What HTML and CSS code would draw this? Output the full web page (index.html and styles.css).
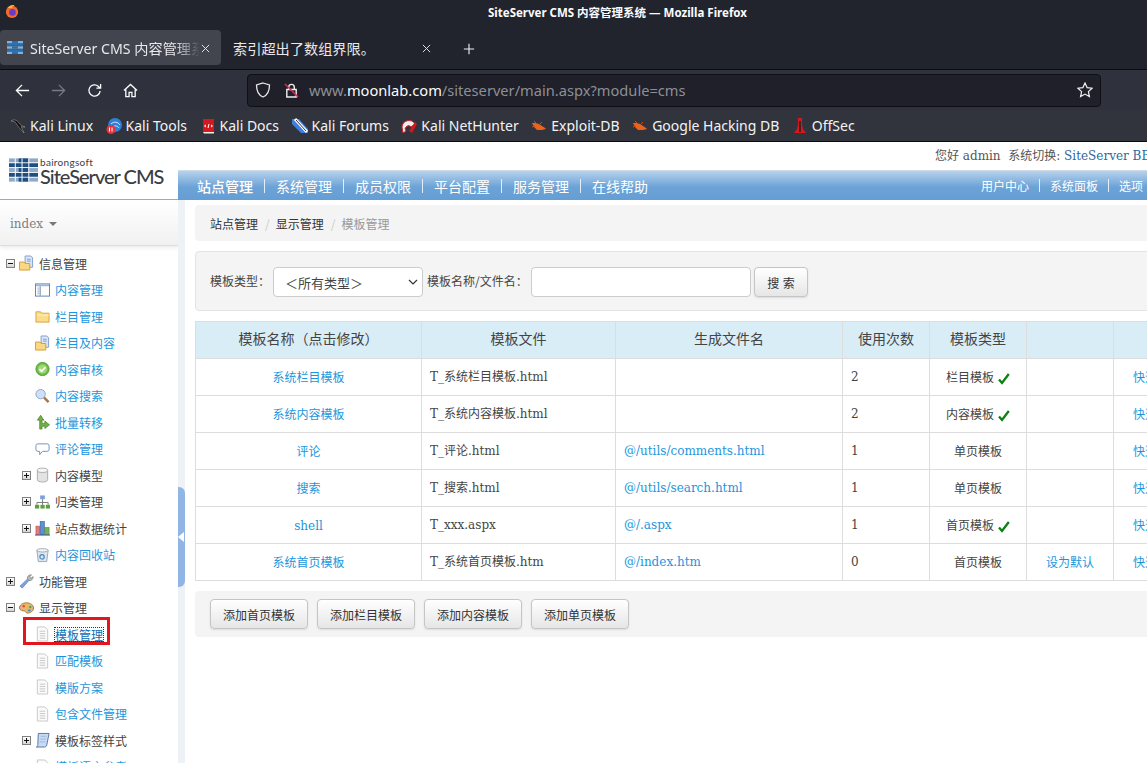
FILE: index.html
```html
<!DOCTYPE html>
<html lang="zh">
<head>
<meta charset="utf-8">
<title>SiteServer CMS 内容管理系统</title>
<link rel="stylesheet" href="styles.css">
</head>
<body>
<svg class="defs" aria-hidden="true">
  <symbol id="grid" viewBox="0 0 30 24">
    <g fill="#8fa9c6"><rect y="0" width="30" height="4"/><rect y="10" width="30" height="4"/><rect y="20" width="30" height="4"/></g>
    <g fill="#1f4f82"><rect y="5" width="30" height="4"/><rect y="15" width="30" height="4"/><rect x="10" width="10" height="4"/><rect x="10" y="10" width="10" height="4"/><rect x="10" y="20" width="10" height="4"/></g>
    <g fill="#fff"><rect x="6" width="1" height="24"/><rect x="13" width="1" height="24"/><rect x="20" width="1" height="24"/></g>
  </symbol>
  <symbol id="fav" viewBox="0 0 16 13">
    <g fill="#7fb2e0"><rect width="16" height="2.400"/><rect y="5.300" width="16" height="2.400"/><rect y="10.600" width="16" height="2.400"/></g>
    <g fill="#2f6ea8"><rect x="5" width="6" height="2.400"/><rect x="5" y="5.300" width="6" height="2.400"/><rect x="5" y="10.600" width="6" height="2.400"/><rect y="2.900" width="16" height="1.900"/><rect y="8.200" width="16" height="1.900"/></g>
  </symbol>
  <symbol id="page" viewBox="0 0 16 16"><path d="M2.500.5h8l3 3v12h-11z" fill="#fbfbfb" stroke="#c6c6c6"/><path d="M5 5h6M5 7.500h6M5 10h6M5 12.500h6" stroke="#c4c4c4"/></symbol>
  <symbol id="folder" viewBox="0 0 16 16"><path d="M1 3.500h5l1 1.500h8v9.500H1z" fill="#f8dd8b" stroke="#d9a23f"/><path d="M2 7h13" stroke="#fff3c4"/></symbol>
  <symbol id="folderdoc" viewBox="0 0 16 16"><path d="M6.500.5h6l2 2v10h-8z" fill="#dbe6f7" stroke="#7d9ccb"/><path d="M8.500 4h4M8.500 6h4" stroke="#7d9ccb"/><path d="M.5 7h5l1 1.500h5v7H.5z" fill="#f8d982" stroke="#d59a35"/></symbol>
  <symbol id="win" viewBox="0 0 16 16"><rect x=".5" y="1.500" width="15" height="13" fill="#fff" stroke="#5a7fb8"/><rect x="1" y="2" width="14" height="2" fill="#9db7de"/><path d="M5.500 4v10" stroke="#5a7fb8"/><path d="M2.500 6h2M2.500 8h2M2.500 10h2M2.500 12h2" stroke="#aab"/></symbol>
  <symbol id="check" viewBox="0 0 16 16"><circle cx="8" cy="8" r="7" fill="#6fbe44" stroke="#4d9a2b"/><circle cx="8" cy="8" r="4.800" fill="#9fd87a"/><path d="M4.800 8.200l2.300 2.300 4-4.500" fill="none" stroke="#fff" stroke-width="1.800"/></symbol>
  <symbol id="search" viewBox="0 0 16 16"><path d="M9.500 9.500l5 5" stroke="#b0743a" stroke-width="2.600"/><circle cx="6" cy="6" r="5" fill="#cfe0f6" stroke="#8aa6ce"/></symbol>
  <symbol id="move" viewBox="0 0 16 16"><path d="M5 15.500V6H2.500L6 .8 9.500 6H7.500v3.500h3V7l5 4-5 4v-2.500h-3v3z" fill="#72b043" stroke="#3f7d22" stroke-width=".7"/></symbol>
  <symbol id="bubble" viewBox="0 0 16 16"><path d="M3 2.500h10a2 2 0 0 1 2 2v4a2 2 0 0 1-2 2H8l-3 3.500v-3.500H3a2 2 0 0 1-2-2v-4a2 2 0 0 1 2-2z" fill="#fff" stroke="#6e8fb8"/></symbol>
  <symbol id="db" viewBox="0 0 16 16"><path d="M2.500 3v10c0 3.300 11 3.300 11 0V3z" fill="#e3e3e3" stroke="#a9a9a9"/><ellipse cx="8" cy="3" rx="5.500" ry="2.300" fill="#f6f6f6" stroke="#a9a9a9"/></symbol>
  <symbol id="tree" viewBox="0 0 16 16"><rect x="5.500" y="1" width="5" height="4" fill="#7ba2d8"/><path d="M8 5v4M2 11V8.500h12V11M8 9v2" fill="none" stroke="#777"/><g fill="#5ba23c"><rect y="11" width="4.500" height="4"/><rect x="5.800" y="11" width="4.500" height="4"/><rect x="11.500" y="11" width="4.500" height="4"/></g></symbol>
  <symbol id="bars" viewBox="0 0 16 16"><rect x="1" y="6" width="4" height="9" fill="#e77b7b" stroke="#b94a4a" stroke-width=".6"/><rect x="5.500" y="1" width="4.500" height="14" fill="#5e8fd0" stroke="#2c5b9c" stroke-width=".6"/><rect x="10.500" y="7.500" width="4.500" height="7.500" fill="#77b257" stroke="#4c8533" stroke-width=".6"/><path d="M0 15.500h16" stroke="#264a86"/></symbol>
  <symbol id="trash" viewBox="0 0 16 16"><path d="M2 3h12l-1.500 12h-9z" fill="#dfe5ec" stroke="#9aa6b4"/><ellipse cx="8" cy="3" rx="6" ry="1.800" fill="#f2f5f8" stroke="#9aa6b4"/><circle cx="7.500" cy="10" r="2.300" fill="none" stroke="#4a86c8" stroke-width="1.300"/></symbol>
  <symbol id="wrench" viewBox="0 0 16 16"><path d="M1 13.500L9.500 5.500 11 7 3.500 15.500z" fill="#7ea3dc" stroke="#4f76b4" stroke-width=".7"/><path d="M9 6c-.6-2.800 1.500-5 4.300-4.600L11.500 3.500l1.300 1.500 2.300-1.700C15.400 6 13 8.200 10.500 7.500z" fill="#b8b8b8" stroke="#777" stroke-width=".7"/></symbol>
  <symbol id="palette" viewBox="0 0 16 16"><path d="M8 2.500c4.500 0 7.500 2.500 7.500 5.500s-3 5.500-6.500 5.500c-2 0-1.500-2-3-2.200C4 11 .5 10.500.5 8c0-3 3-5.500 7.500-5.500z" fill="#e3b676" stroke="#a97a3c"/><circle cx="5" cy="6" r="1.300" fill="#d94b3d"/><circle cx="8.500" cy="5" r="1.300" fill="#f0c132"/><circle cx="12" cy="7" r="1.300" fill="#5aa845"/><circle cx="11" cy="10.500" r="1.300" fill="#4a86c8"/></symbol>
  <symbol id="scroll" viewBox="0 0 16 16"><path d="M3.500 1h11.500l-2.500 12.500c-.3 1.500-1.500 2-2.500 2H1.500C3 15 3 14 3 13z" fill="#c8dbf4" stroke="#54719f"/><path d="M6 4h6M5.500 7h6M5 10h6" stroke="#9db8dc"/></symbol>
  <symbol id="tick" viewBox="0 0 12 12"><path d="M1 6.500l3 3.500L10.800 1" fill="none" stroke="#0a820f" stroke-width="2.300"/></symbol>
</svg>

<header class="chrome">
  <div class="titlebar">
    <svg class="fx" viewBox="0 0 16 16"><circle cx="8" cy="8.500" r="7" fill="#f36a2a"/><circle cx="8.500" cy="9" r="3.800" fill="#6a3bc2"/><path d="M3 4C5 .5 9 0 11 1c-2 .5-3 1.500-3 3-2 0-3.500 0-5 0z" fill="#ffb53a"/></svg>
    <span class="titletext">SiteServer CMS 内容管理系统 — Mozilla Firefox</span>
  </div>
  <div class="tabs">
    <div class="tab active">
      <svg class="tabicon"><use href="#fav"/></svg>
      <span class="tablabel fade">SiteServer CMS 内容管理系统</span>
      <svg class="tabclose" viewBox="0 0 10 10"><path d="M1 1l8 8M9 1l-8 8"/></svg>
    </div>
    <div class="tab">
      <span class="tablabel">索引超出了数组界限。</span>
      <svg class="tabclose" viewBox="0 0 10 10"><path d="M1 1l8 8M9 1l-8 8"/></svg>
    </div>
    <svg class="newtab" viewBox="0 0 14 14"><path d="M7 1v12M1 7h12"/></svg>
  </div>
  <div class="navbar">
    <svg class="navicon" viewBox="0 0 16 16"><path d="M15 8H1.500M7.500 2L1.500 8l6 6"/></svg>
    <svg class="navicon dim" viewBox="0 0 16 16"><path d="M1 8h13.500M8.500 2l6 6-6 6"/></svg>
    <svg class="navicon" viewBox="0 0 16 16"><path d="M14 8.500A6 6 0 1 1 12 3.500L14 5.500M14.500 1v4.500H10"/></svg>
    <svg class="navicon" viewBox="0 0 16 16"><path d="M1 8l7-6.500L15 8M3 7v7.500h3.500V10h3v4.500H13V7"/></svg>
    <div class="urlbar">
      <svg class="shield" viewBox="0 0 16 16"><path d="M8 1l6.500 2c0 6-1.500 10-6.500 12C3 13 1.500 9 1.500 3z"/></svg>
      <svg class="lock" viewBox="0 0 16 16"><path d="M5 7V4.500a3 3 0 0 1 6 0V7M3 7h10v8H3z" fill="none" stroke="#eee" stroke-width="1.500"/><path d="M1 1l14 14" stroke="#e22850" stroke-width="1.500"/></svg>
      <span class="url">www.<b>moonlab.com</b>/siteserver/main.aspx?module=cms</span>
      <svg class="star" viewBox="0 0 16 16"><path d="M8 1l2.100 4.600 5 .6-3.700 3.400 1 5L8 12.100 3.600 14.600l1-5L.9 6.200l5-.6z"/></svg>
    </div>
  </div>
  <div class="bookmarks">
    <a class="bm"><svg viewBox="0 0 16 16"><path d="M1 3c3-2 6-1 8 2 1 2 3 3 6 4-2 0-3 0-4-.5 1 2 2 4 3 6.500-2-2-3-4-5-5.500C7 7 6 4 4 3.500 3 3.300 2 3.500 1 3z" fill="#111" stroke="#ccc" stroke-width=".4"/></svg>Kali Linux</a>
    <a class="bm"><svg viewBox="0 0 16 16"><circle cx="9" cy="7" r="7" fill="#2f7fd8"/><path d="M5 6c3-3 7-2 9 1M7 9c2-2 5-1 6 1" fill="none" stroke="#dbe9fb"/><circle cx="5" cy="11.500" r="4.500" fill="#e5353f"/><path d="M3.500 9.500v4M6 9.500v4" stroke="#fff"/></svg>Kali Tools</a>
    <a class="bm"><svg viewBox="0 0 16 16"><path d="M3 1h11v13H3z" fill="#d3181e"/><path d="M3 14h11v1.500H4z" fill="#eee"/><path d="M6 7l-1.500 1L6 9M11 7l1.500 1L11 9M9 6L8 10" fill="none" stroke="#fff"/></svg>Kali Docs</a>
    <a class="bm"><svg viewBox="0 0 16 16"><path d="M0 1l7 0 9 10v4H9L0 6z" fill="#3d7fe0"/><path d="M3 1l12 13" stroke="#fff" stroke-width="3"/><path d="M4 2l10 11" stroke="#333"/></svg>Kali Forums</a>
    <a class="bm"><svg viewBox="0 0 16 16"><path d="M1 9a7 7 0 0 1 13-3L10 9a3 3 0 0 0-5 4l-3 2z" fill="#eee" stroke="#c22" stroke-width="1"/><path d="M14 4l2 2-5 9-3-2z" fill="#d3181e"/></svg>Kali NetHunter</a>
    <a class="bm"><svg viewBox="0 0 16 16"><path d="M1 5l4 0 3 1 6 4 1 1-4 1-5 0-3-3z" fill="#e8641c"/><path d="M3 3l3 3M9 6l2-2M1 9l3-1" stroke="#c84f10"/></svg>Exploit-DB</a>
    <a class="bm"><svg viewBox="0 0 16 16"><path d="M1 5l4 0 3 1 6 4 1 1-4 1-5 0-3-3z" fill="#e8641c"/><path d="M3 3l3 3M9 6l2-2M1 9l3-1" stroke="#c84f10"/></svg>Google Hacking DB</a>
    <a class="bm"><svg viewBox="0 0 16 16"><path d="M6 0h4v6l1 5 3 4H2l3-4 1-5z" fill="#d3181e"/><path d="M8 3v11" stroke="#222" stroke-width="1.600"/></svg>OffSec</a>
  </div>
</header>

<div class="page">
  <aside class="side">
    <div class="logo">
      <svg class="logomark"><use href="#grid"/></svg>
      <div class="logotext"><span class="logosmall">bairongsoft</span><span class="logobig">SiteServer CMS</span></div>
    </div>
    <div class="sitepick">index<i class="caret"></i></div>
    <ul class="tree">
      <li class="node top"><i class="box minus"></i><svg class="ico"><use href="#folderdoc"/></svg>信息管理</li>
      <li class="node leaf"><svg class="ico"><use href="#win"/></svg><a>内容管理</a></li>
      <li class="node leaf"><svg class="ico"><use href="#folder"/></svg><a>栏目管理</a></li>
      <li class="node leaf"><svg class="ico"><use href="#folderdoc"/></svg><a>栏目及内容</a></li>
      <li class="node leaf"><svg class="ico"><use href="#check"/></svg><a>内容审核</a></li>
      <li class="node leaf"><svg class="ico"><use href="#search"/></svg><a>内容搜索</a></li>
      <li class="node leaf"><svg class="ico"><use href="#move"/></svg><a>批量转移</a></li>
      <li class="node leaf"><svg class="ico"><use href="#bubble"/></svg><a>评论管理</a></li>
      <li class="node sub"><i class="box plus"></i><svg class="ico"><use href="#db"/></svg>内容模型</li>
      <li class="node sub"><i class="box plus"></i><svg class="ico"><use href="#tree"/></svg>归类管理</li>
      <li class="node sub"><i class="box plus"></i><svg class="ico"><use href="#bars"/></svg>站点数据统计</li>
      <li class="node leaf"><svg class="ico"><use href="#trash"/></svg><a>内容回收站</a></li>
      <li class="node top"><i class="box plus"></i><svg class="ico"><use href="#wrench"/></svg>功能管理</li>
      <li class="node top"><i class="box minus"></i><svg class="ico"><use href="#palette"/></svg>显示管理</li>
      <li class="node leaf current"><svg class="ico"><use href="#page"/></svg><a class="focus">模板管理</a><span class="redbox"></span></li>
      <li class="node leaf"><svg class="ico"><use href="#page"/></svg><a>匹配模板</a></li>
      <li class="node leaf"><svg class="ico"><use href="#page"/></svg><a>模版方案</a></li>
      <li class="node leaf"><svg class="ico"><use href="#page"/></svg><a>包含文件管理</a></li>
      <li class="node sub"><i class="box plus"></i><svg class="ico"><use href="#scroll"/></svg>模板标签样式</li>
      <li class="node leaf"><svg class="ico"><use href="#page"/></svg><a>模板语言参考</a></li>
    </ul>
  </aside>

  <div class="right">
    <div class="welcome">您好 admin &nbsp;系统切换: <a>SiteServer BBS</a></div>
    <nav class="topnav">
      <a class="strong">站点管理</a><i class="sep"></i><a>系统管理</a><i class="sep"></i><a>成员权限</a><i class="sep"></i><a>平台配置</a><i class="sep"></i><a>服务管理</a><i class="sep"></i><a>在线帮助</a>
      <div class="topright"><a>用户中心</a><i class="sep"></i><a>系统面板</a><i class="sep"></i><a>选项</a></div>
    </nav>
    <div class="body">
      <div class="strip"><span class="toggle"></span></div>
      <main class="main">
        <div class="crumb"><a>站点管理</a><i>/</i><a>显示管理</a><i>/</i><span>模板管理</span></div>
        <form class="well filter">
          <label>模板类型<span class="tc">：</span></label>
          <select class="sel"><option>＜所有类型＞</option></select>
          <label class="lab2">模板名称/文件名<span class="tc">：</span></label>
          <input class="txt" type="text">
          <button type="button" class="btn search">搜 索</button>
        </form>
        <table class="grid">
          <thead>
            <tr><th class="c1">模板名称<span class="tc">（</span>点击修改<span class="tc">）</span></th><th class="c2">模板文件</th><th class="c3">生成文件名</th><th class="c4">使用次数</th><th class="c5">模板类型</th><th class="c6"></th><th class="c7"></th></tr>
          </thead>
          <tbody>
            <tr><td class="mid"><a>系统栏目模板</a></td><td>T_系统栏目模板.html</td><td></td><td>2</td><td class="mid">栏目模板 <svg class="tick"><use href="#tick"/></svg></td><td></td><td class="quick"><a>快速编辑</a></td></tr>
            <tr><td class="mid"><a>系统内容模板</a></td><td>T_系统内容模板.html</td><td></td><td>2</td><td class="mid">内容模板 <svg class="tick"><use href="#tick"/></svg></td><td></td><td class="quick"><a>快速编辑</a></td></tr>
            <tr><td class="mid"><a>评论</a></td><td>T_评论.html</td><td><a>@/utils/comments.html</a></td><td>1</td><td class="mid">单页模板</td><td></td><td class="quick"><a>快速编辑</a></td></tr>
            <tr><td class="mid"><a>搜索</a></td><td>T_搜索.html</td><td><a>@/utils/search.html</a></td><td>1</td><td class="mid">单页模板</td><td></td><td class="quick"><a>快速编辑</a></td></tr>
            <tr><td class="mid"><a>shell</a></td><td>T_xxx.aspx</td><td><a>@/.aspx</a></td><td>1</td><td class="mid">首页模板 <svg class="tick"><use href="#tick"/></svg></td><td></td><td class="quick"><a>快速编辑</a></td></tr>
            <tr><td class="mid"><a>系统首页模板</a></td><td>T_系统首页模板.htm</td><td><a>@/index.htm</a></td><td>0</td><td class="mid">首页模板</td><td class="mid"><a>设为默认</a></td><td class="quick"><a>快速编辑</a></td></tr>
          </tbody>
        </table>
        <div class="well actions">
          <button type="button" class="btn">添加首页模板</button>
          <button type="button" class="btn">添加栏目模板</button>
          <button type="button" class="btn">添加内容模板</button>
          <button type="button" class="btn">添加单页模板</button>
        </div>
      </main>
    </div>
  </div>
</div>
</body>
</html>
```
FILE: styles.css
```css
* { box-sizing: border-box; }
html, body { margin: 0; padding: 0; height: 763px; width: 1147px; overflow: hidden; background: #fff; }
body { font-family: "DejaVu Serif", "Noto Sans CJK SC", serif; font-size: 12px; color: #444; }
.defs { position: absolute; width: 0; height: 0; }
a { color: inherit; text-decoration: none; }
i { font-style: normal; }
.tc { font-family: "Noto Sans CJK TC", sans-serif; }

/* browser chrome */
.chrome { height: 142px; background: #22242d; font-family: "Noto Sans", "Noto Sans CJK SC", sans-serif; color: #fbfbfe; border-bottom: 1px solid #0c0c0d; }
.titlebar { height: 30px; display: flex; align-items: center; justify-content: center; position: relative; padding-left: 88px; }
.fx { position: absolute; left: 5px; top: 4px; width: 14px; height: 15px; }
.titletext { font-size: 11.500px; font-weight: 700; margin-top: -7px; }
.tabs { height: 40px; display: flex; align-items: flex-start; border-bottom: 1px solid #0c0c0d; }
.tab { width: 221px; height: 35px; display: flex; align-items: center; padding-left: 7px; border-radius: 4px; position: relative; }
.tab.active { width: 221px; background: #42454e; }
.tab + .tab { padding-left: 12px; }
.tabicon { width: 16px; height: 13px; margin-right: 7px; flex: none; }
.tablabel { font-size: 14.200px; white-space: nowrap; overflow: hidden; width: 170px; color: #e8e8ec; }
.fade { -webkit-mask-image: linear-gradient(90deg, #000 85%, transparent); mask-image: linear-gradient(90deg, #000 85%, transparent); }
.tab + .tab .tablabel { width: 190px; }
.tabclose { width: 9px; height: 9px; position: absolute; right: 11px; top: 14px; fill: none; stroke: #e0e0e6; stroke-width: 1.100; }
.newtab { width: 12px; height: 12px; margin: 13px 0 0 21px; fill: none; stroke: #f0f0f4; stroke-width: 1.300; }
.navbar { height: 40px; background: #2f323c; display: flex; align-items: center; padding-left: 15px; }
.navicon { width: 15px; height: 15px; margin-right: 21px; fill: none; stroke: #fbfbfe; stroke-width: 1.400; flex: none; }
.navicon.dim { stroke: #777a82; }
.urlbar { width: 854px; height: 33px; margin-left: 88px; background: #1f2029; border: 1px solid #0f1014; border-radius: 4px; display: flex; align-items: center; padding-left: 7px; position: relative; }
.shield { width: 16px; height: 16px; fill: none; stroke: #e8e8ec; stroke-width: 1.300; flex: none; }
.lock { width: 15px; height: 15px; margin-left: 13px; flex: none; }
.url { font-size: 14.650px; margin-left: 10px; color: #8d8f96; white-space: nowrap; }
.url b { color: #fbfbfe; font-weight: 400; }
.star { width: 16px; height: 16px; position: absolute; right: 7px; top: 7px; fill: none; stroke: #f0f0f4; stroke-width: 1.200; }
.bookmarks { height: 31px; background: #31343d; display: flex; align-items: center; padding-left: 10px; gap: 12.500px; }
.bm { display: flex; align-items: center; gap: 4px; font-size: 14px; color: #f3f3f5; white-space: nowrap; }
.bm svg { width: 16px; height: 16px; flex: none; }

/* page */
.page { display: flex; height: 621px; width: 1147px; overflow: hidden; }
.side { width: 178px; flex: none; background: #fff; }
.logo { height: 58px; padding: 15px 0 0 9px; display: flex; gap: 2px; border-bottom: 1px solid #8fb0d2; }
.logomark { width: 29px; height: 24px; margin-top: 1px; flex: none; }
.logotext { display: flex; flex-direction: column; font-family: Lato, sans-serif; color: #3b3d42; }
.logosmall { font-size: 10px; height: 10px; line-height: 10px; letter-spacing: .3px; }
.logobig { font-size: 20px; height: 18px; line-height: 18px; white-space: nowrap; font-weight: 500; letter-spacing: -1px; }
.sitepick { height: 46px; background: linear-gradient(#fff, #f1f1f1); border-bottom: 1px solid #ddd; box-shadow: 0 2px 4px rgba(0, 0, 0, .08); padding: 3px 10px 0; display: flex; align-items: center; color: #808080; font-size: 12px; margin-bottom: 4px; }
.caret { width: 0; height: 0; border: 4px solid transparent; border-top-color: #777; border-bottom: 0; margin-left: 6px; }
.tree { list-style: none; margin: 0; padding: 0; font-size: 12px; font-family: "Noto Sans CJK SC", sans-serif; }
.node { height: 26.500px; display: flex; align-items: center; color: #444; white-space: nowrap; position: relative; }
.node a { color: #1b96dd; }
.top { padding-left: 6px; }
.top .ico { margin: 0 5px 0 4px; }
.sub { padding-left: 22px; }
.sub .ico { margin: 0 5px 0 4px; }
.leaf { padding-left: 35px; }
.leaf .ico { margin-right: 5px; }
.ico { width: 15px; height: 16px; flex: none; }
.box { width: 9px; height: 9px; flex: none; border: 1px solid #808080; background: linear-gradient(#fff, #d5d5d5); position: relative; }
.box::before { content: ""; position: absolute; left: 1px; right: 1px; top: 3px; height: 1px; background: #111; }
.plus::after { content: ""; position: absolute; top: 1px; bottom: 1px; left: 3px; width: 1px; background: #111; }
.focus { color: #0b6fb3 !important; outline: 1px dotted #333; outline-offset: 0; text-decoration: underline; line-height: 13px; }
.redbox { position: absolute; left: 23px; top: -4px; width: 87px; height: 28px; border: 3px solid #e2161d; }

.right { width: 969px; flex: none; overflow: hidden; }
.welcome { height: 28px; padding: 6px 0 0 757px; font-size: 12px; white-space: nowrap; color: #555; line-height: 16px; }
.welcome a { color: #2a6a9e; }
.topnav { height: 30px; background: linear-gradient(#b7d2ec, #6ca3d7 55%, #659ed4); border-top: 1px solid #cfdbe6; display: flex; align-items: center; padding-left: 19px; color: #fff; font-family: "Noto Sans CJK SC", sans-serif; font-size: 14px; white-space: nowrap; }
.topnav .strong { font-weight: 500; }
.sep { width: 1px; height: 14px; background: #e4eef8; margin: 0 11px; flex: none; }
.topright { margin-left: auto; font-size: 12px; display: flex; align-items: center; padding-right: 4px; }
.topright .sep { margin: 0 10px; height: 13px; }
.body { display: flex; height: 563px; }
.strip { width: 7px; flex: none; background: #eef2f6; position: relative; }
.toggle { position: absolute; left: 0; top: 287px; width: 7px; height: 100px; background: #91b5e5; border-radius: 0 6px 6px 0; }
.toggle::after { content: ""; position: absolute; left: 0; top: 45px; border: 5px solid transparent; border-left: 0; border-right: 6px solid #fff; }
.main { padding: 5px 0 0 10px; width: 1010px; flex: none; }
.crumb { height: 36px; background: #f4f4f4; border-radius: 4px; display: flex; align-items: center; padding-left: 15px; font-family: "Noto Sans CJK SC", sans-serif; font-size: 12px; margin-bottom: 10px; color: #333; }
.crumb i { color: #ccc; margin: 0 6px 0 7px; }
.crumb span { color: #999; }
.well { background: #f4f4f4; border-radius: 4px; }
.filter { height: 60px; border: 1px solid #e4e4e4; display: flex; align-items: center; padding: 2px 0 0 14px; font-family: "Noto Sans CJK SC", sans-serif; font-size: 12px; margin-bottom: 10px; }
.filter label { white-space: nowrap; width: 63px; flex: none; margin-bottom: 4px; }
.filter .lab2 { width: 104px; margin-left: 4px; }
.sel { appearance: none; -webkit-appearance: none; width: 150px; height: 30px; border: 1px solid #ccc; border-radius: 4px; background: #fff url("data:image/svg+xml,%3Csvg xmlns='http://www.w3.org/2000/svg' width='10' height='6'%3E%3Cpath d='M1 1l4 4 4-4' fill='none' stroke='%23333' stroke-width='1.200'/%3E%3C/svg%3E") no-repeat right 4px center; color: #444; font-family: "Noto Sans CJK SC", sans-serif; font-size: 13px; padding-left: 11px; flex: none; }
.txt { width: 220px; height: 30px; border: 1px solid #ccc; border-radius: 4px; background: #fff; flex: none; }
.btn { height: 30px; border: 1px solid #c5c5c5; border-radius: 4px; background: linear-gradient(#fff, #e6e6e6); box-shadow: 0 1px 2px rgba(0, 0, 0, .1); font-family: "Noto Sans CJK SC", sans-serif; font-size: 12px; color: #333; padding: 0 12px; white-space: nowrap; }
.search { width: 54px; margin-left: 3px; padding: 0; word-spacing: 1px; }
.grid { border-collapse: collapse; table-layout: fixed; width: 1000px; margin-bottom: 10px; }
.grid th { height: 37px; background: #d9edf7; border: 1px solid #ddd; font-family: "Noto Sans CJK SC", sans-serif; font-size: 14px; font-weight: 400; color: #444; padding: 0 0 5px; }
.grid td { height: 37px; line-height: 16px; border: 1px solid #ddd; padding: 0 8px 1px; white-space: nowrap; overflow: hidden; }
.grid td a { color: #1b96dd; }
.c1 { width: 226px; } .c2 { width: 194px; } .c3 { width: 227px; } .c4 { width: 87px; } .c5 { width: 97px; } .c6 { width: 87px; } .c7 { width: 82px; }
.grid td.mid { text-align: center; padding: 1px 8px 0; }
.grid td.quick { padding: 1px 8px 0 19px; }
.tick { width: 12px; height: 12px; vertical-align: -3px; }
.actions { height: 46px; display: flex; align-items: center; padding-left: 15px; gap: 9px; }
.actions .btn { width: 98px; padding: 0; }
```
